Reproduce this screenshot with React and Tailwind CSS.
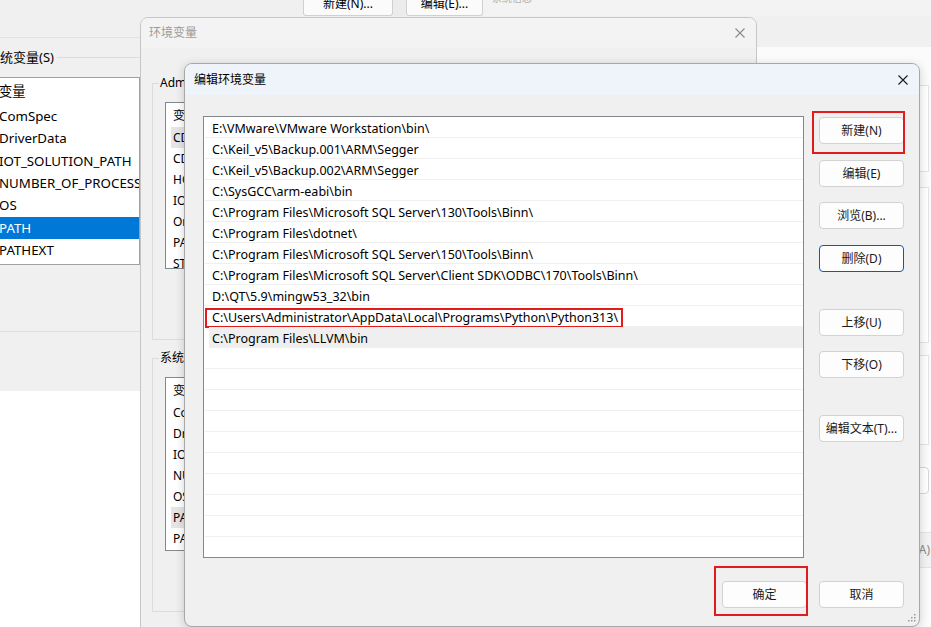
import React from 'react';

const paths = [
    'E:\\VMware\\VMware Workstation\\bin\\',
    'C:\\Keil_v5\\Backup.001\\ARM\\Segger',
    'C:\\Keil_v5\\Backup.002\\ARM\\Segger',
    'C:\\SysGCC\\arm-eabi\\bin',
    'C:\\Program Files\\Microsoft SQL Server\\130\\Tools\\Binn\\',
    'C:\\Program Files\\dotnet\\',
    'C:\\Program Files\\Microsoft SQL Server\\150\\Tools\\Binn\\',
    'C:\\Program Files\\Microsoft SQL Server\\Client SDK\\ODBC\\170\\Tools\\Binn\\',
    'D:\\QT\\5.9\\mingw53_32\\bin',
    'C:\\Users\\Administrator\\AppData\\Local\\Programs\\Python\\Python313\\',
    'C:\\Program Files\\LLVM\\bin',
];

const userVars = ['CDSROOT', 'CDS_LIC_FILE', 'HOME', 'IOT_TOOLS', 'OneDrive', 'PATH', 'STM32_PRG_PATH'];
const sysVars = ['ComSpec', 'DriverData', 'IOT_SOLUTION_PATH', 'NUMBER_OF_PROCESSORS', 'OS', 'PATH', 'PATHEXT'];

const CloseX = ({ className = '' }) => (
    <svg width="10" height="10" viewBox="0 0 10 10" className={className}>
        <path d="M0.5 0.5L9.5 9.5M9.5 0.5L0.5 9.5" stroke="currentColor" strokeWidth="1.1" fill="none" />
    </svg>
);

const Btn = ({ children, className = '', focused = false }) => (
    <div
        className={`h-[27px] w-[85px] shrink-0 flex items-center justify-center rounded-[4px] border bg-[#fdfdfd] text-[12px] text-[#1a1a1a] ${
            focused ? 'border-[#005fb8]' : 'border-[#d2d2d2]'
        } ${className}`}
    >
        {children}
    </div>
);

const BackgroundWindow = () => (
    <div className="absolute inset-0 flex">
        {/* left window that peeks out */}
        <div className="w-[140px] flex flex-col text-[13px]">
            <div className="h-[38px] bg-[#f0f0f0] border-b border-[#e2e2e2]" />
            <div className="h-[39px] bg-[#f0f0f0] flex items-center">
                <span className="-ml-[13px] whitespace-nowrap">系统变量(S)</span>
                <div className="flex-1 h-px bg-[#dcdcdc] ml-[3px]" />
            </div>
            <div className="h-[188px] bg-white border-y border-r border-[#a0a0a0] overflow-hidden text-[13.3px]">
                <div className="h-[27px] flex items-center -ml-[1px] whitespace-nowrap">变量</div>
                {sysVars.map((v) => (
                    <div
                        key={v}
                        className={`h-[22.4px] flex items-center whitespace-nowrap pt-px ${
                            v === 'PATH' ? 'bg-[#0078d7] text-white' : ''
                        }`}
                    >
                        <span className="-ml-[1px]">{v}</span>
                    </div>
                ))}
            </div>
            <div className="h-[67px] bg-[#f0f0f0] border-b border-[#dedede]" />
            <div className="h-[59px] bg-[#f0f0f0]" />
            <div className="flex-1 bg-white" />
        </div>

        {/* right part of the window behind */}
        <div className="flex-1 flex flex-col">
            <div className="h-[16px] bg-[#f3f3f3] flex text-[12px]">
                <div className="w-[163px] bg-[#f0f0f0]" />
                <div className="w-[90px] h-[16px] bg-[#fbfbfb] border border-t-0 border-[#d0d0d0] rounded-b-[3px] flex justify-center overflow-hidden">
                    <span className="-mt-[5px] whitespace-nowrap">新建(N)...</span>
                </div>
                <div className="w-[13px] bg-[#ececec]" />
                <div className="w-[77px] h-[16px] bg-[#fbfbfb] border border-t-0 border-[#d0d0d0] rounded-b-[3px] flex justify-center overflow-hidden">
                    <span className="-mt-[5px] whitespace-nowrap">编辑(E)...</span>
                </div>
                <div className="flex-1 overflow-hidden pl-[9px]">
                    <span className="block -mt-[9px] text-[10px] text-[#b0b0b0] whitespace-nowrap">系统信息</span>
                </div>
            </div>
            <div className="h-[31px] bg-[#f0f0f0]" />
            <div className="flex-1 bg-[#fbfbfb] flex flex-col items-end pr-[2px]">
                <div className="mt-[38px] w-[60px] h-[87px] border border-[#e3e3e3] bg-white" />
                <div className="mt-[15px] w-[60px] h-[156px] border border-[#e3e3e3] bg-white" />
                <div className="mt-[12px] w-[60px] h-[90px] border border-[#e3e3e3] bg-white" />
                <div className="mt-[22px] w-[60px] h-[27px] border border-[#d6d6d6] rounded-[4px] bg-white" />
                <div className="mt-[38px] w-[62px] -mr-[2px] h-[36px] border-y border-[#e3e3e3] bg-[#f3f3f3] flex items-center justify-end pr-[1px] text-[12px] text-[#8a8a8a]">
                    (A)
                </div>
            </div>
        </div>
    </div>
);

const VarList = ({ rows, highlight, className = '' }) => (
    <div className={`ml-[12px] w-[560px] bg-white border border-[#828790] overflow-hidden ${className}`}>
        <div className="h-[24px] flex items-center pl-[7px] pt-px">
            <span className="w-[180px]">变量</span>
            <span>值</span>
        </div>
        {rows.map((r) => (
            <div
                key={r}
                className={`h-[21px] flex items-center ml-[5px] pl-[2px] pt-px whitespace-nowrap ${
                    r === highlight ? 'bg-[#e5e5e5]' : ''
                }`}
            >
                {r}
            </div>
        ))}
    </div>
);

const EnvWindow = () => (
    <div className="absolute left-[140px] top-[17px] w-[617px] h-[640px] rounded-t-[8px] border border-[#c6c6c6] bg-[#f0f0f0] overflow-hidden text-[12px]">
        <div className="h-[30px] bg-[#f3f3f3] flex items-center justify-between pl-[8px] pr-[11px]">
            <span className="text-[#9b9b9b]">环境变量</span>
            <CloseX className="text-[#8c8c8c]" />
        </div>
        <fieldset className="mt-[27px] ml-[11px] mr-[11px] h-[265px] border border-[#dcdcdc]">
            <legend className="ml-[6px] px-[1px] leading-[16px]">Administrator 的用户变量(U)</legend>
            <VarList rows={userVars} highlight="CDSROOT" className="mt-[11px] h-[167px]" />
        </fieldset>
        <fieldset className="mt-[10px] ml-[11px] mr-[11px] h-[262px] border border-[#dcdcdc]">
            <legend className="ml-[6px] px-[1px] leading-[16px]">系统变量(S)</legend>
            <VarList rows={sysVars} highlight="PATH" className="mt-[11px] h-[174px]" />
        </fieldset>
    </div>
);

const EditDialog = () => {
    const rows = [...paths, ...Array(10).fill('')];
    return (
        <div className="absolute left-[184px] top-[63px] w-[736px] h-[564px] rounded-[8px] border border-[#a8a8a8] bg-[#f0f0f0] shadow-[0_2px_10px_rgba(0,0,0,0.18)] overflow-hidden flex flex-col text-[12px]">
            <div className="h-[31px] shrink-0 bg-[#eef4f9] flex items-center justify-between pl-[9px] pr-[11px]">
                <span>编辑环境变量</span>
                <CloseX className="text-[#1a1a1a]" />
            </div>
            <div className="flex pl-[18px] pt-[21px]">
                <div className="w-[601px] h-[442px] border border-[#828790] bg-white overflow-hidden text-[12.5px]">
                    {rows.map((p, i) => (
                        <div
                            key={i}
                            className={`relative h-[21px] border-b border-[#efefef] flex items-center pt-[4px] whitespace-nowrap ${
                                i === 10 ? 'ml-[5px] pl-[3px] bg-[#efefef]' : 'ml-px pl-[7px]'
                            }`}
                        >
                            {p}
                            {i === 9 && (
                                <div className="absolute left-0 top-[2px] w-[418px] h-[20px] border-2 border-[#e31b1b]" />
                            )}
                        </div>
                    ))}
                </div>
                <div className="ml-[15px] flex flex-col">
                    <Btn className="mt-px">新建(N)</Btn>
                    <Btn className="mt-[16px]">编辑(E)</Btn>
                    <Btn className="mt-[15px]">浏览(B)...</Btn>
                    <Btn className="mt-[16px]" focused>删除(D)</Btn>
                    <Btn className="mt-[37px]">上移(U)</Btn>
                    <Btn className="mt-[15px]">下移(O)</Btn>
                    <Btn className="mt-[37px]">编辑文本(T)...</Btn>
                </div>
            </div>
            <div className="flex justify-end gap-[12px] pr-[15px] mt-[23px]">
                <Btn>确定</Btn>
                <Btn>取消</Btn>
            </div>

            {/* red annotation boxes */}
            <div className="absolute left-[627px] top-[47px] w-[93px] h-[43px] border-2 border-[#e31b1b]" />
            <div className="absolute left-[529px] top-[502px] w-[94px] h-[50px] border-2 border-[#e31b1b]" />

            {/* resize grip */}
            <svg className="absolute right-[3px] bottom-[2px]" width="10" height="10" viewBox="0 0 10 10">
                <g fill="#9a9a9a">
                    <rect x="8" y="0" width="1.5" height="1.5" />
                    <rect x="5" y="3" width="1.5" height="1.5" />
                    <rect x="8" y="3" width="1.5" height="1.5" />
                    <rect x="2" y="6" width="1.5" height="1.5" />
                    <rect x="5" y="6" width="1.5" height="1.5" />
                    <rect x="8" y="6" width="1.5" height="1.5" />
                </g>
            </svg>
        </div>
    );
};

const App = () => {
    return (
        <div className="relative w-[931px] h-[627px] overflow-hidden bg-white text-black font-['Noto_Sans','Noto_Sans_CJK_SC',sans-serif]">
            <BackgroundWindow />
            <EnvWindow />
            <EditDialog />
        </div>
    );
};

export default App;
